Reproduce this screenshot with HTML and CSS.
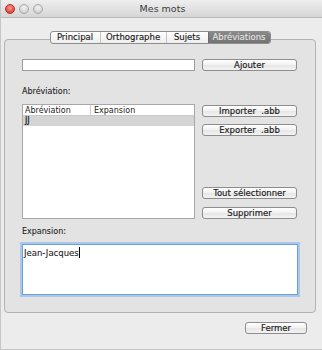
FILE: index.html
```html
<!DOCTYPE html>
<html lang="fr">
  <head>
    <meta charset="utf-8" />
    <meta name="viewport" content="width=device-width, initial-scale=1.0" />
    <title>Mes mots</title>
    <link rel="stylesheet" href="styles.css">
  </head>

  <body>
    <div class="fenetre">
      <header class="titre">
        <div class="feux">
          <span class="feu rouge"></span>
          <span class="feu"></span>
          <span class="feu"></span>
        </div>
        <h1>Mes mots</h1>
      </header>

      <section class="boite">
        <nav class="onglets">
          <button>Principal</button>
          <button>Orthographe</button>
          <button>Sujets</button>
          <button class="valgt">Abréviations</button>
        </nav>

        <div class="ligne">
          <input type="text" class="champ" />
          <button class="knap">Ajouter</button>
        </div>

        <p class="etiquette">Abréviation:</p>

        <div class="ligne liste-ligne">
          <div class="tableau">
            <div class="entete">
              <span class="col1">Abréviation</span>
              <span class="col2">Expansion</span>
            </div>
            <div class="rangee valgt-rangee">
              <span class="col1">JJ</span>
              <span class="col2"></span>
            </div>
          </div>
          <div class="knapper">
            <button class="knap">Importer&nbsp; .abb</button>
            <button class="knap">Exporter&nbsp; .abb</button>
            <button class="knap skub">Tout sélectionner</button>
            <button class="knap">Supprimer</button>
          </div>
        </div>

        <p class="etiquette tæt">Expansion:</p>
        <div class="tekst">Jean-Jacques<span class="markoer"></span></div>
      </section>

      <footer class="bund">
        <button class="knap fermer">Fermer</button>
      </footer>
    </div>
  </body>
</html>
```

FILE: styles.css
```css
* {
  box-sizing: border-box;
}

body {
  margin: 0;
  font-family: "DejaVu Sans", sans-serif;
  font-size: 8.5px;
  color: #222;
}

.fenetre {
  width: 322px;
  height: 350px;
  background-color: #ececec;
  border-left: 1px solid #c6c6c6;
  border-bottom: 1px solid #c6c6c6;
  display: flex;
  flex-direction: column;
}

.titre {
  height: 18px;
  display: flex;
  align-items: center;
  background: linear-gradient(#eeeeee, #d6d6d6);
  border-bottom: 1px solid #b9b9b9;
}

.feux {
  display: flex;
  gap: 4px;
  padding-left: 4px;
}

.feu {
  width: 10px;
  height: 10px;
  border-radius: 50%;
  background: radial-gradient(circle at 50% 35%, #f4f4f4, #c4c4c4);
  border: 1px solid #a9a9a9;
}

.rouge {
  background: radial-gradient(circle at 50% 35%, #ff9a8a, #d7241d);
  border-color: #a8332b;
}

.titre h1 {
  flex: 1;
  margin: 0 0 0 -40px;
  text-align: center;
  font-size: 9.5px;
  font-weight: normal;
  color: #3a3a3a;
}

.boite {
  margin: 21px 6px 0 3px;
  border: 1px solid #b3b3b3;
  border-radius: 4px;
  background-color: #e3e3e3;
  padding: 0 17px 17px 17px;
}

.onglets {
  display: flex;
  width: 221px;
  height: 13px;
  margin: -9px auto 0;
  border: 1px solid #8e8e8e;
  border-radius: 3px;
  background: linear-gradient(#ffffff, #ededed);
  overflow: hidden;
}

.onglets button {
  border: 0;
  border-left: 1px solid #c4c4c4;
  background: none;
  padding: 0;
  font-family: inherit;
  font-size: 8.5px;
  color: #1a1a1a;
  -webkit-text-stroke: 0.15px #1a1a1a;
  line-height: 11px;
}

.onglets button:nth-child(1) {
  width: 49px;
  border-left: 0;
}

.onglets button:nth-child(2) {
  width: 66px;
}

.onglets button:nth-child(3) {
  width: 42px;
}

.onglets .valgt {
  flex: 1;
  background: linear-gradient(#8a8a8a, #727272);
  color: #e6e6e6;
  -webkit-text-stroke: 0.1px #e6e6e6;
  border-left-color: #6c6c6c;
}

.ligne {
  display: flex;
  gap: 7px;
  margin-top: 15px;
}

.champ {
  width: 173px;
  height: 12px;
  border: 1px solid #9d9d9d;
  background: #fff;
  margin: 0;
}

.knap {
  width: 95px;
  height: 12px;
  padding: 0;
  border: 1px solid #8d8d8d;
  border-radius: 3px;
  background: linear-gradient(#ffffff, #f1f1f1 50%, #e6e6e6 51%, #f3f3f3);
  font-family: inherit;
  font-size: 8.5px;
  color: #1a1a1a;
  -webkit-text-stroke: 0.15px #1a1a1a;
  line-height: 10px;
}

.etiquette {
  margin: 15px 0 0;
  line-height: 12px;
  font-size: 8px;
  color: #222;
  -webkit-text-stroke: 0.1px #222;
}

.etiquette.tæt {
  margin-top: 7px;
}

.liste-ligne {
  margin-top: 6px;
}

.tableau {
  width: 173px;
  height: 115px;
  border: 1px solid #a8a8a8;
  background: #fff;
}

.entete,
.rangee {
  display: flex;
  height: 11px;
  line-height: 11px;
  font-size: 8px;
}

.entete {
  border-bottom: 1px solid #c9c9c9;
}

.entete .col2 {
  border-left: 1px solid #cfcfcf;
}

.col1 {
  width: 67px;
  padding-left: 2px;
}

.col2 {
  flex: 1;
  padding-left: 3px;
}

.valgt-rangee {
  background-color: #d4d4d4;
  height: 10px;
  line-height: 10px;
  -webkit-text-stroke: 0.2px #111;
}

.knapper {
  display: flex;
  flex-direction: column;
  gap: 7px;
  padding-top: 1px;
}

.knapper .skub {
  margin-top: auto;
  margin-bottom: 1px;
}

.tekst {
  margin-top: 6px;
  height: 51px;
  border: 1px solid #6f9fd7;
  box-shadow: 0 0 0 2px #a9c8ec;
  background: #fff;
  padding: 2px 1px;
  font-size: 8.5px;
  line-height: 12px;
  -webkit-text-stroke: 0.1px #222;
}

.markoer {
  display: inline-block;
  width: 1px;
  height: 11px;
  background: #000;
  vertical-align: -2px;
}

.bund {
  display: flex;
  justify-content: flex-end;
  padding: 9px 15px 0 0;
}

.fermer {
  width: 62px;
}
```
